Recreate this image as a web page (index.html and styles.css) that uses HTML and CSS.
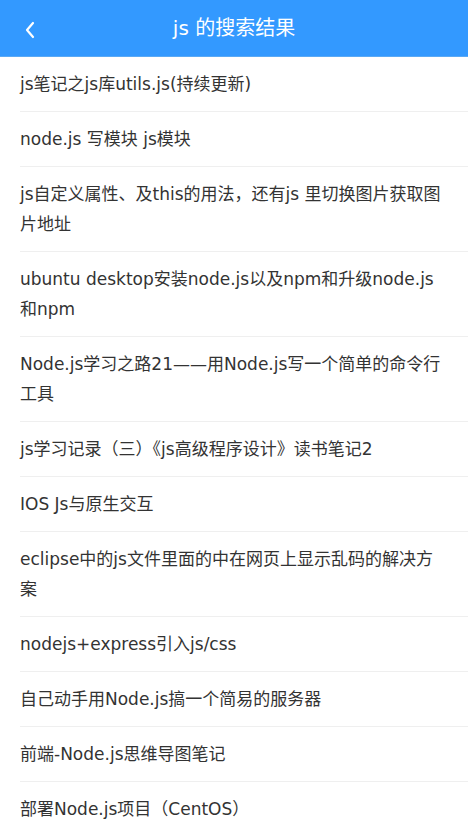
FILE: index.html
```html
<!DOCTYPE html>
<html lang="zh-CN">
<head>
<meta charset="utf-8">
<title>js 的搜索结果</title>
<link rel="stylesheet" href="styles.css">
</head>
<body>
<header class="bar">
  <a class="back" href="#"><svg width="12" height="18" viewBox="0 0 12 18"><path d="M9 2 L3 9 L9 16" fill="none" stroke="#fff" stroke-width="2.2" stroke-linecap="round" stroke-linejoin="round"/></svg></a>
  <h1 class="title">js 的搜索结果</h1>
</header>
<ul class="list">
  <li class="item">js笔记之js库utils.js(持续更新)</li>
  <li class="item">node.js 写模块 js模块</li>
  <li class="item">js自定义属性、及this的用法，还有js 里切换图片获取图片地址</li>
  <li class="item">ubuntu desktop安装node.js以及npm和升级node.js和npm</li>
  <li class="item">Node.js学习之路21——用Node.js写一个简单的命令行工具</li>
  <li class="item">js学习记录（三）《js高级程序设计》读书笔记2</li>
  <li class="item">IOS Js与原生交互</li>
  <li class="item">eclipse中的js文件里面的中在网页上显示乱码的解决方案</li>
  <li class="item">nodejs+express引入js/css</li>
  <li class="item">自己动手用Node.js搞一个简易的服务器</li>
  <li class="item">前端-Node.js思维导图笔记</li>
  <li class="item">部署Node.js项目（CentOS）</li>
</ul>
</body>
</html>
```
FILE: styles.css
```css
html, body {
  margin: 0;
  padding: 0;
  background: #fff;
  font-family: "DejaVu Sans", "Noto Sans CJK SC", sans-serif;
}
.bar {
  position: relative;
  height: 56px;
  background: #3399ff;
  border-bottom: 1px solid #5aa9f5;
  display: flex;
  align-items: center;
  justify-content: center;
}
.back {
  position: absolute;
  left: 24px;
  top: 21px;
  display: block;
  width: 12px;
  height: 18px;
}
.back svg { display: block; }
.title {
  margin: 0;
  color: #fff;
  font-size: 20px;
  font-weight: normal;
  line-height: 56px;
}
.list {
  list-style: none;
  margin: 0;
  padding: 0 0 0 20px;
}
.item {
  padding: 12px 20px 12px 0;
  font-size: 17px;
  line-height: 30px;
  color: #333;
  border-bottom: 1px solid #efefef;
}
```
